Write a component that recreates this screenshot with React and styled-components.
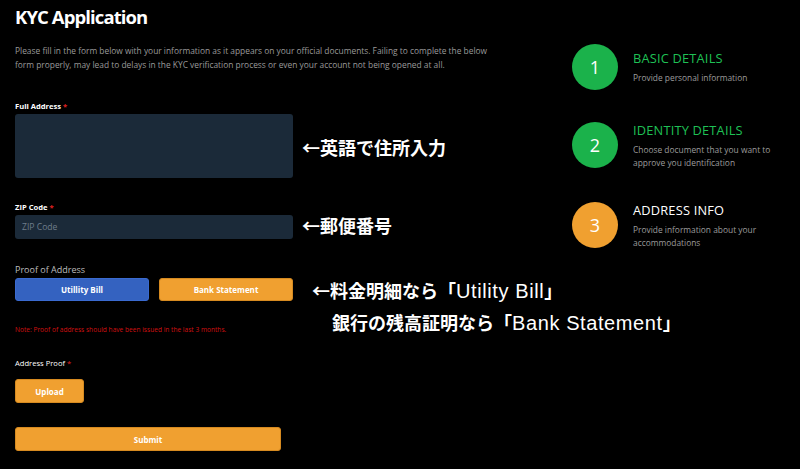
import React from "react";
import styled, { createGlobalStyle } from "styled-components";

const Global = createGlobalStyle`
  html, body { margin: 0; padding: 0; background: #000; }
  body { font-family: "Open Sans", "Noto Sans", sans-serif; color: #fff; }
  * { box-sizing: border-box; }
`;

const Page = styled.div`
  position: relative;
  width: 800px;
  height: 469px;
  background: #000;
  overflow: hidden;
  display: flex;
`;

const Main = styled.div`
  width: 572px;
  flex: none;
  padding: 0 0 0 15px;
  display: flex;
  flex-direction: column;
`;

const Title = styled.h1`
  margin: 4px 0 0;
  font-family: "Open Sans", sans-serif;
  font-weight: 700;
  font-size: 18.5px;
  line-height: 26px;
  letter-spacing: -0.9px;
  color: #fff;
`;

const Intro = styled.p`
  margin: 14px 0 0;
  width: 486px;
  font-size: 8.4px;
  line-height: 14px;
  color: #9a9a9a;
`;

const Label = styled.div`
  margin-top: ${(p) => p.$mt}px;
  font-size: 7.6px;
  line-height: 10px;
  font-weight: ${(p) => (p.$bold ? 700 : 400)};
  color: #fff;
`;

const Req = styled.span`
  color: #e02020;
`;

const SectionLabel = styled.div`
  margin-top: ${(p) => p.$mt}px;
  font-size: 9px;
  line-height: 12px;
  color: #bdbdbd;
`;

const Field = styled.div`
  width: 278px;
  height: ${(p) => p.$h}px;
  margin-top: ${(p) => p.$mt}px;
  background: #1b2a39;
  border-radius: 3px;
  display: flex;
  align-items: center;
  padding-left: 7px;
  font-size: 8.6px;
  color: #6f7d8b;
`;

const ButtonRow = styled.div`
  display: flex;
  gap: 10px;
  width: 278px;
  margin-top: 2px;
`;

const Btn = styled.div`
  flex: ${(p) => (p.$grow ? 1 : "none")};
  width: ${(p) => (p.$w ? p.$w + "px" : "auto")};
  height: ${(p) => p.$h || 24}px;
  margin-top: ${(p) => p.$mt || 0}px;
  border-radius: 3px;
  background: ${(p) => (p.$blue ? "#3462c0" : "#f0a030")};
  border: 1px solid ${(p) => (p.$blue ? "#3a6ad0" : "#d68a20")};
  display: flex;
  align-items: center;
  justify-content: center;
  font-size: 8px;
  font-weight: 700;
  color: #fff;
`;

const Note = styled.div`
  margin-top: 24px;
  font-size: 6.6px;
  line-height: 9px;
  color: #d01010;
`;

const Steps = styled.div`
  padding-top: 44px;
  display: flex;
  flex-direction: column;
`;

const Step = styled.div`
  display: flex;
  align-items: center;
  gap: 15px;
  height: 46px;
  margin-bottom: ${(p) => p.$mb || 0}px;
`;

const Circle = styled.div`
  width: 46px;
  height: 46px;
  border-radius: 50%;
  flex: none;
  background: ${(p) => p.$c};
  display: flex;
  align-items: center;
  justify-content: center;
  font-size: 18px;
  color: #fff;
`;

const StepText = styled.div``;

const StepTitle = styled.div`
  font-size: 12.8px;
  line-height: 17px;
  color: ${(p) => p.$c};
  letter-spacing: 0.2px;
`;

const StepSub = styled.div`
  margin-top: 4px;
  width: 140px;
  font-size: 8.4px;
  line-height: 13px;
  color: #9c9c9c;
`;

const Annot = styled.div`
  position: absolute;
  left: ${(p) => p.$x}px;
  top: ${(p) => p.$y}px;
  font-family: "Noto Sans CJK JP", sans-serif;
  font-weight: 700;
  font-size: 18px;
  line-height: 22px;
  color: #fff;
  white-space: nowrap;
`;

const Latin = styled.span`
  font-family: "Liberation Sans", "Noto Sans CJK JP", sans-serif;
  font-weight: 400;
  font-size: 20px;
  letter-spacing: 0.6px;
`;

export default function App() {
  return (
    <Page>
      <Global />
      <Main>
        <Title>KYC Application</Title>
        <Intro>
          Please fill in the form below with your information as it appears on your official documents. Failing to complete the below form properly, may lead to delays in the KYC verification process or even your account not being opened at all.
        </Intro>
        <Label $bold $mt={29}>Full Address <Req>*</Req></Label>
        <Field $h={64} $mt={3} />
        <Label $bold $mt={24}>ZIP Code <Req>*</Req></Label>
        <Field $h={24} $mt={3}>ZIP Code</Field>
        <SectionLabel $mt={25}>Proof of Address</SectionLabel>
        <ButtonRow>
          <Btn $grow $blue $h={23}>Utillity Bill</Btn>
          <Btn $grow $h={23}>Bank Statement</Btn>
        </ButtonRow>
        <Note>Note: Proof of address should have been issued in the last 3 months.</Note>
        <Label $mt={24}>Address Proof <Req>*</Req></Label>
        <Btn $w={69} $mt={11}>Upload</Btn>
        <Btn $w={266} $mt={24}>Submit</Btn>
      </Main>
      <Steps>
        <Step $mb={32}>
          <Circle $c="#1bb24b">1</Circle>
          <StepText>
            <StepTitle $c="#1fc055">BASIC DETAILS</StepTitle>
            <StepSub>Provide personal information</StepSub>
          </StepText>
        </Step>
        <Step $mb={34}>
          <Circle $c="#1bb24b">2</Circle>
          <StepText>
            <StepTitle $c="#1fc055">IDENTITY DETAILS</StepTitle>
            <StepSub>Choose document that you want to approve you identification</StepSub>
          </StepText>
        </Step>
        <Step>
          <Circle $c="#f0a030">3</Circle>
          <StepText>
            <StepTitle $c="#fff">ADDRESS INFO</StepTitle>
            <StepSub>Provide information about your accommodations</StepSub>
          </StepText>
        </Step>
      </Steps>
      <Annot $x={302} $y={136}>←英語で住所入力</Annot>
      <Annot $x={302} $y={214}>←郵便番号</Annot>
      <Annot $x={312} $y={279}>←料金明細なら「<Latin>Utility Bill</Latin>」</Annot>
      <Annot $x={332} $y={311}>銀行の残高証明なら「<Latin>Bank Statement</Latin>」</Annot>
    </Page>
  );
}
